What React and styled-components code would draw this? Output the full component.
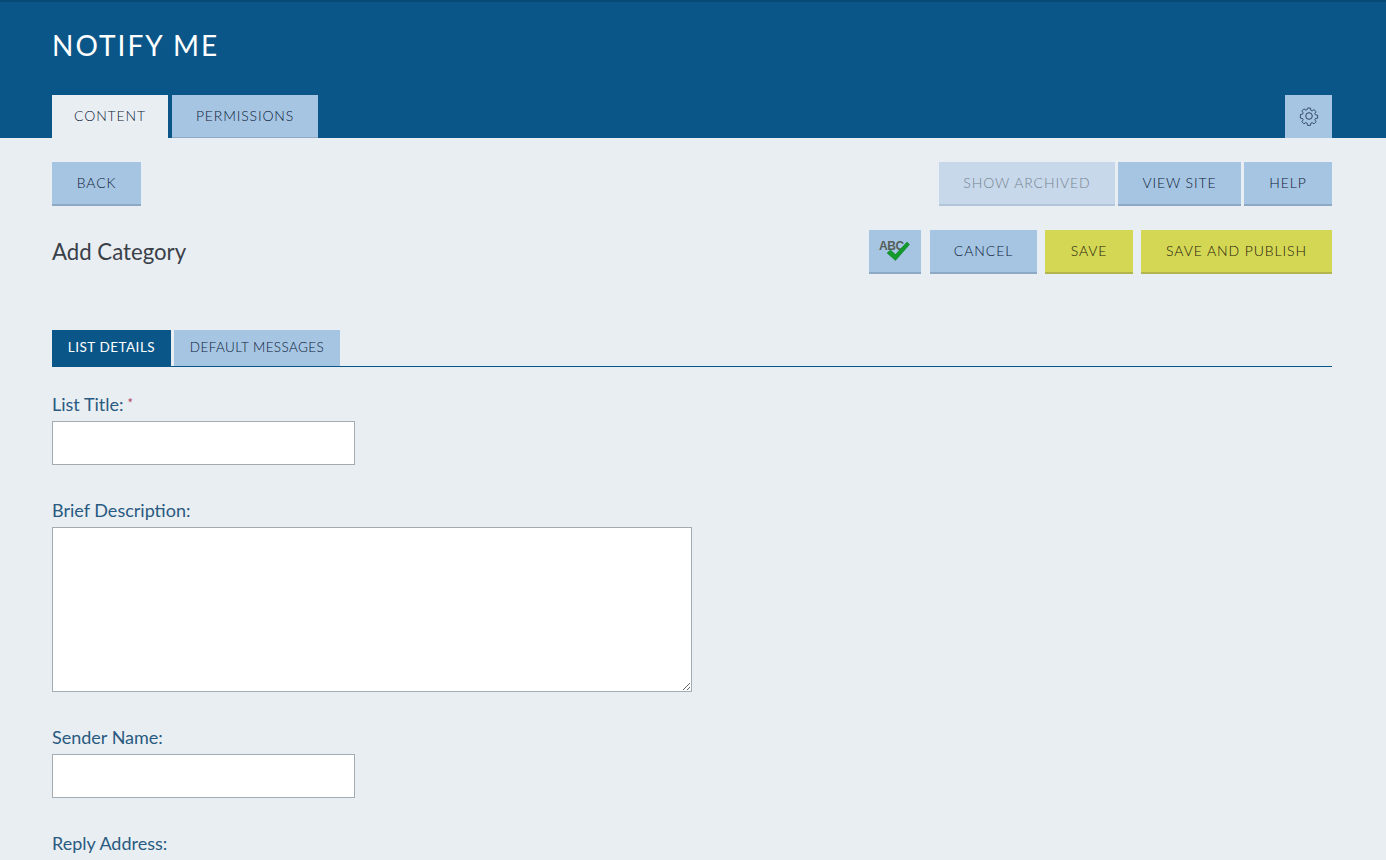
import React from 'react'
import styled, { createGlobalStyle } from 'styled-components'

const GlobalStyle = createGlobalStyle`
  html, body {
    margin: 0;
    height: 860px;
    overflow: hidden;
    background: #e9eef3;
    font-family: 'Lato', 'Open Sans', sans-serif;
  }
  * { box-sizing: border-box; }
`

const GearIcon = () => (
  <svg width="20" height="20" viewBox="0 0 20 20" fill="none" stroke="#1f3550" strokeWidth="0.9" strokeLinejoin="round">
    <path d="M8.4 1.2h3.2l.5 2.5 1.4.6 2.1-1.4 2.3 2.3-1.4 2.1.6 1.4 2.5.5v3.2l-2.5.5-.6 1.4 1.4 2.1-2.3 2.3-2.1-1.4-1.4.6-.5 2.5H8.4l-.5-2.5-1.4-.6-2.1 1.4-2.3-2.3 1.4-2.1-.6-1.4-2.5-.5V8.4l2.5-.5.6-1.4-1.4-2.1 2.3-2.3 2.1 1.4 1.4-.6z" transform="translate(1 1) scale(0.9)" />
    <circle cx="10" cy="10" r="3.3" />
  </svg>
)

const SpellCheckIcon = () => (
  <SpellWrap>
    <SpellText>ABC</SpellText>
    <svg width="24" height="20" viewBox="0 0 24 20">
      <path d="M1 12 L4.5 9 L9.5 13.5 L21 1 L23.5 3.5 L9.5 19.5 Z" fill="#129a2b" stroke="#0a7a20" strokeWidth="0.5" />
    </svg>
  </SpellWrap>
)

export default function App() {
  return (
    <Page>
      <GlobalStyle />
      <Header>
        <Title>NOTIFY ME</Title>
        <HeaderTabs>
          <HeaderTab $active $width={116}>CONTENT</HeaderTab>
          <HeaderTab $width={146}>PERMISSIONS</HeaderTab>
          <SettingsButton aria-label="Settings"><GearIcon /></SettingsButton>
        </HeaderTabs>
      </Header>
      <Main>
        <ToolRow>
          <ActionButton $width={89}>BACK</ActionButton>
          <ToolGroup>
            <ActionButton $width={176} $disabled>SHOW ARCHIVED</ActionButton>
            <ActionButton $width={123}>VIEW SITE</ActionButton>
            <ActionButton $width={88}>HELP</ActionButton>
          </ToolGroup>
        </ToolRow>
        <TitleRow>
          <PageHeading>Add Category</PageHeading>
          <SaveGroup>
            <ActionButton $width={52} aria-label="Spell check"><SpellCheckIcon /></ActionButton>
            <ActionButton $width={107}>CANCEL</ActionButton>
            <ActionButton $width={88} $primary>SAVE</ActionButton>
            <ActionButton $width={191} $primary>SAVE AND PUBLISH</ActionButton>
          </SaveGroup>
        </TitleRow>
        <FormTabs>
          <FormTab $active $width={119}>LIST DETAILS</FormTab>
          <FormTab $width={166}>DEFAULT MESSAGES</FormTab>
        </FormTabs>
        <Form>
          <Field>
            <Label>List Title:<Required>*</Required></Label>
            <TextInput type="text" />
          </Field>
          <Field>
            <Label>Brief Description:</Label>
            <TextArea />
          </Field>
          <Field>
            <Label>Sender Name:</Label>
            <TextInput type="text" />
          </Field>
          <Field>
            <Label>Reply Address:</Label>
          </Field>
        </Form>
      </Main>
    </Page>
  )
}

const Page = styled.div`
  width: 1386px;
  height: 860px;
  overflow: hidden;
`

const Header = styled.header`
  height: 138px;
  padding: 0 54px 0 52px;
  display: flex;
  flex-direction: column;
  justify-content: space-between;
  background: #0b5688;
  border-top: 2px solid #094a75;
`

const Title = styled.h1`
  margin: 25px 0 0;
  font-size: 28px;
  line-height: 36px;
  font-weight: 400;
  letter-spacing: 2.05px;
  color: #fff;
`

const HeaderTabs = styled.nav`
  display: flex;
  gap: 4px;
`

const HeaderTab = styled.div`
  width: ${(p) => p.$width}px;
  height: 43px;
  padding-bottom: 2px;
  display: flex;
  align-items: center;
  justify-content: center;
  font-size: 14px;
  font-weight: 300;
  letter-spacing: 0.85px;
  color: #0c2036;
  background: ${(p) => (p.$active ? '#e9eef3' : '#a6c5e3')};
  border-bottom: ${(p) => (p.$active ? '0' : '1px solid #8ea9c6')};
`

const SettingsButton = styled.button`
  width: 47px;
  height: 43px;
  margin-left: auto;
  padding: 0 0 2px;
  display: flex;
  align-items: center;
  justify-content: center;
  background: #a6c5e3;
  border: 0;
`

const Main = styled.main`
  width: 1280px;
  margin-left: 52px;
  padding-top: 24px;
`

const ToolRow = styled.div`
  display: flex;
  justify-content: space-between;
`

const ToolGroup = styled.div`
  display: flex;
  gap: 3px;
`

const TitleRow = styled.div`
  margin-top: 24px;
  display: flex;
  justify-content: space-between;
`

const SaveGroup = styled.div`
  display: flex;
  gap: 8px;

  & > :first-child {
    margin-right: 1px;
  }
`

const PageHeading = styled.h2`
  margin: 8px 0 0;
  font-size: 22.2px;
  line-height: 28px;
  font-weight: 400;
  color: #3a4048;
`

const colours = (p) => {
  if (p.$primary) return 'background: #d4d753; border-color: #b3b64c; color: #1d2010;'
  if (p.$disabled) return 'background: #c7d8eb; border-color: #b3c5da; color: #76838f;'
  return 'background: #a6c5e3; border-color: #8ea9c6; color: #0c2036;'
}

const ActionButton = styled.button`
  width: ${(p) => p.$width}px;
  height: 44px;
  padding: 0 0 2px;
  display: flex;
  align-items: center;
  justify-content: center;
  font-family: inherit;
  font-size: 14px;
  font-weight: 300;
  letter-spacing: 0.9px;
  border: 0;
  border-bottom: 2px solid;
  ${colours}
`

const SpellWrap = styled.span`
  position: relative;
  display: block;
  width: 30px;
  height: 24px;

  svg {
    position: absolute;
    left: 6px;
    top: 3px;
  }
`

const SpellText = styled.span`
  position: absolute;
  left: -1px;
  top: 1px;
  font-family: 'Liberation Sans', sans-serif;
  font-size: 12px;
  font-weight: 700;
  letter-spacing: -0.4px;
  color: #55605a;
`

const FormTabs = styled.div`
  margin-top: 56px;
  display: flex;
  gap: 3px;
  border-bottom: 1px solid #0b5688;
`

const FormTab = styled.div`
  width: ${(p) => p.$width}px;
  height: 36px;
  padding-bottom: 2px;
  display: flex;
  align-items: center;
  justify-content: center;
  font-size: 13.5px;
  font-weight: ${(p) => (p.$active ? 400 : 300)};
  letter-spacing: ${(p) => (p.$active ? '0.5px' : '0.4px')};
  color: ${(p) => (p.$active ? '#fff' : '#0c2036')};
  background: ${(p) => (p.$active ? '#0b5688' : '#a6c5e3')};
`

const Form = styled.div`
  padding-top: 27px;
  display: flex;
  flex-direction: column;
  gap: 35px;
`

const Field = styled.div`
  display: flex;
  flex-direction: column;
  align-items: flex-start;
`

const Label = styled.label`
  height: 22px;
  margin-bottom: 5px;
  display: block;
  font-size: 18px;
  line-height: 20px;
  color: #2a5a80;
`

const Required = styled.span`
  margin-left: 4px;
  vertical-align: 3px;
  font-size: 13px;
  line-height: 0;
  color: #b0405a;
`

const TextInput = styled.input`
  width: 303px;
  height: 44px;
  background: #fff;
  border: 1px solid #a3abb3;
  outline: 0;
`

const TextArea = styled.textarea`
  width: 640px;
  height: 165px;
  display: block;
  background: #fff;
  border: 1px solid #a3abb3;
  outline: 0;
`
